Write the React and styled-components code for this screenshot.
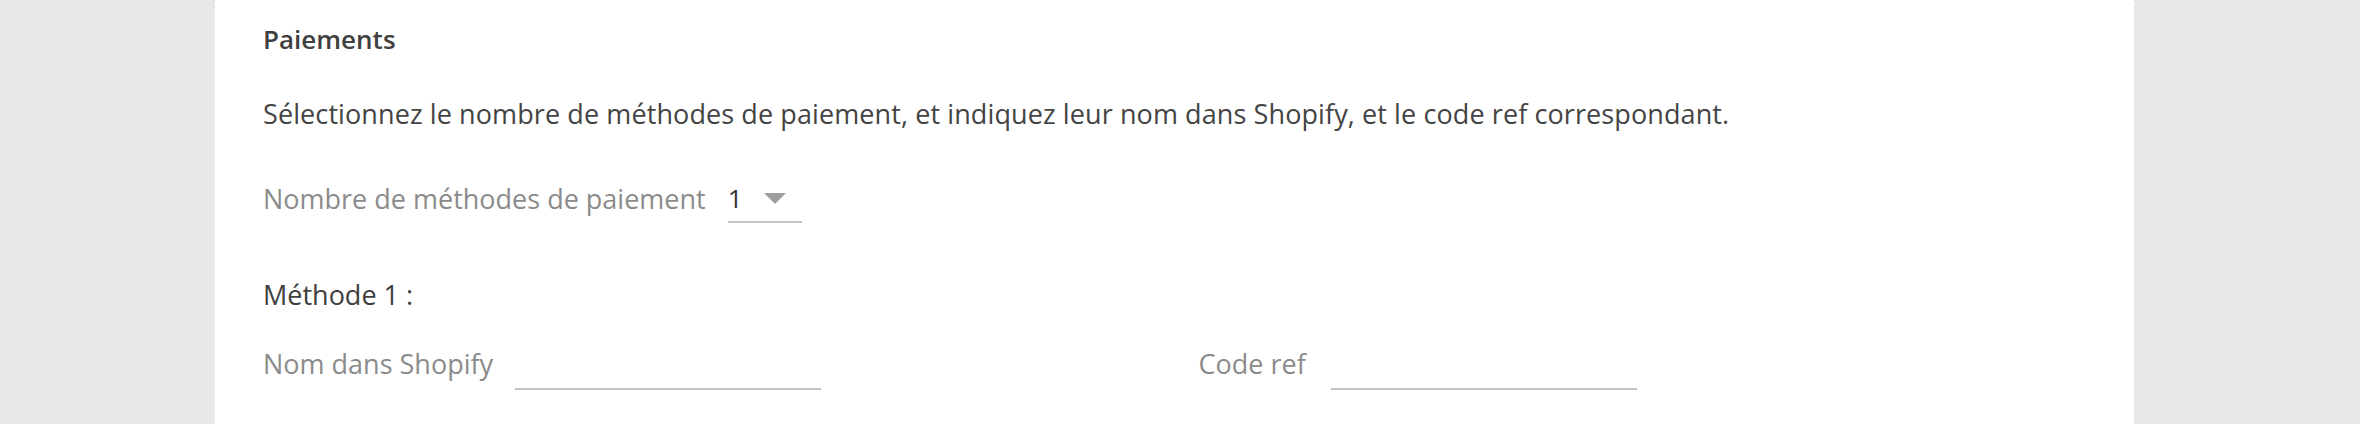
import React from 'react';
import styled, { createGlobalStyle } from 'styled-components';

const GlobalStyle = createGlobalStyle`
  html, body {
    margin: 0;
    padding: 0;
    background: #e8e8e8;
  }
  body {
    font-family: 'Open Sans', 'Noto Sans', sans-serif;
  }
`;

const Page = styled.div`
  width: 2360px;
  height: 424px;
  overflow: hidden;
  background: #e8e8e8;
  padding-left: 214px;
  box-sizing: border-box;
`;

const Card = styled.div`
  width: 1921px;
  height: 424px;
  box-sizing: border-box;
  background: #fff;
  border-left: 1px dotted #d6d6d6;
  border-right: 1px dotted #d6d6d6;
  padding: 24px 48px 0 48px;
`;

const Title = styled.h2`
  margin: 0;
  font-size: 26px;
  line-height: 30px;
  font-weight: 600;
  color: #404040;
`;

const Intro = styled.p`
  margin: 45px 0 0 0;
  font-size: 27px;
  line-height: 30px;
  letter-spacing: 0.1px;
  color: #444;
`;

const Row = styled.div`
  display: flex;
  align-items: center;
  margin-top: ${p => p.$top || 0}px;
`;

const Label = styled.label`
  font-size: 27px;
  line-height: 30px;
  color: #8b8b8b;
  margin-right: ${p => p.$gap || 23}px;
  white-space: nowrap;
`;

const Select = styled.div`
  width: 74px;
  height: 48px;
  box-sizing: border-box;
  border-bottom: 2px solid #c4c4c4;
  display: flex;
  align-items: center;
  justify-content: space-between;
  padding-right: 16px;
  font-size: 26px;
  color: #333;
`;

const Caret = styled.span`
  width: 0;
  height: 0;
  border-left: 11px solid transparent;
  border-right: 11px solid transparent;
  border-top: 11px solid #9e9e9e;
`;

const SubTitle = styled.h3`
  margin: 57px 0 0 0;
  font-size: 27px;
  line-height: 30px;
  font-weight: 400;
  color: #404040;
`;

const Fields = styled.div`
  display: grid;
  grid-template-columns: 1fr 1fr;
  column-gap: 48px;
  margin-top: 28px;
`;

const Input = styled.input`
  width: 306px;
  height: 52px;
  box-sizing: border-box;
  border: none;
  border-bottom: 2px solid #c4c4c4;
  outline: none;
  background: transparent;
  font-family: inherit;
  font-size: 26px;
  color: #333;
  padding: 0;
`;

const App = () => {
  return (
    <>
      <GlobalStyle />
      <Page>
        <Card>
          <Title>Paiements</Title>
          <Intro>
            Sélectionnez le nombre de méthodes de paiement, et indiquez leur nom dans Shopify, et le code ref correspondant.
          </Intro>
          <Row $top={46}>
            <Label $gap={22}>Nombre de méthodes de paiement</Label>
            <Select>
              <span>1</span>
              <Caret />
            </Select>
          </Row>
          <SubTitle>Méthode 1 :</SubTitle>
          <Fields>
            <Row>
              <Label htmlFor="nom" $gap={22}>Nom dans Shopify</Label>
              <Input id="nom" type="text" />
            </Row>
            <Row>
              <Label htmlFor="code" $gap={25}>Code ref</Label>
              <Input id="code" type="text" />
            </Row>
          </Fields>
        </Card>
      </Page>
    </>
  );
};

export default App;
